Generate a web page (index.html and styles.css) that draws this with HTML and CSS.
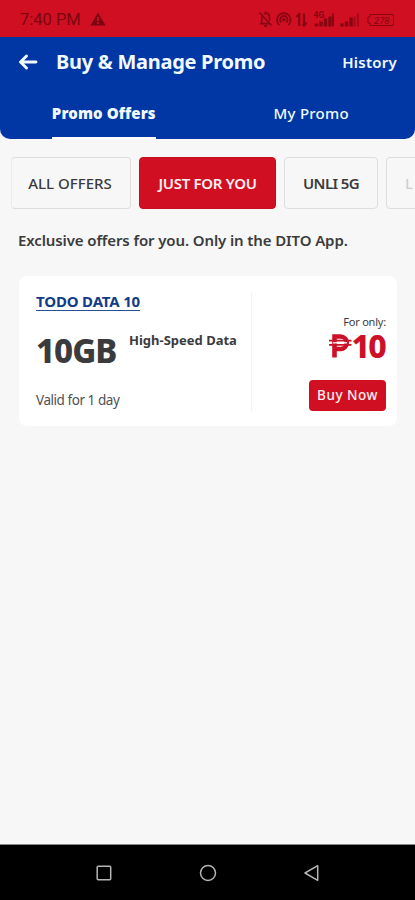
FILE: index.html
```html
<!DOCTYPE html>
<html lang="en">
<head>
<meta charset="utf-8">
<meta name="viewport" content="width=device-width, initial-scale=1">
<title>Buy &amp; Manage Promo</title>
<link rel="stylesheet" href="styles.css">
</head>
<body>
<div class="screen">
  <div class="status">
    <span class="clock">7:40 PM</span>
    <svg class="warn" width="16" height="14" viewBox="0 0 16 14"><path fill="currentColor" fill-rule="evenodd" d="M8 0.4 15.6 13.6H.4ZM7.1 5v4h1.8V5Zm0 5.3v1.8h1.8v-1.8Z"/></svg>
    <svg class="tray" width="138" height="20" viewBox="258 8 138 20" fill="none" stroke="currentColor" stroke-width="1.700">
      <path d="M260 22.700h9M261.800 22v-5q0-2 1-3M264 12.800q2-1.500 4 0 1.500 1 1.500 4v3M265.500 10.500v2M259.500 11.500l12 13"/><path d="M264 25h3" stroke-width="2"/>
      <path d="M279.300 24a6.800 6.800 0 1 1 9 0M281.200 21.300a3.700 3.700 0 1 1 5.200 0"/><circle cx="283.800" cy="18.800" r="1.700" fill="currentColor" stroke="none"/>
      <path d="M299.200 25V13.500M296.500 16l2.700-3 1 1M304 12.500V24M306.500 21.500l-2.500 3-1.500-1.500" stroke-width="2.200"/>
      <path d="M316.500 25.500v-3M321 25.500v-5M325.500 25.500v-8M330 25.500v-10" stroke-width="3.400"/><path d="M333 25.500V12.500" stroke-width="2"/>
      <path d="M342 25.500v-3M346.500 25.500v-5M351 25.500v-9" stroke-width="3.400"/><path d="M354.500 25.500v-10M358 25.500V12.500" stroke-width="2" opacity=".6"/>
      <path d="M370 13.500h22q1.500 0 1.500 1.500v8q0 1.500-1.500 1.500h-22V22h-2v-6h2z" stroke-width="1"/>
      <text x="313.500" y="16.500" class="tiny">4G</text>
      <text x="374" y="22.500" class="level">278</text>
    </svg>
  </div>

  <header class="header">
    <div class="bar">
      <svg class="back" width="20" height="16" viewBox="0 0 20 16"><path d="M18 8H3M8.500 2 2.500 8l6 6" fill="none" stroke="currentColor" stroke-width="2.900" stroke-linecap="round" stroke-linejoin="round"/></svg>
      <h1 class="title">Buy &amp; Manage Promo</h1>
      <span class="history">History</span>
    </div>
    <nav class="tabs">
      <div class="tab"><span class="tab-label active">Promo Offers</span></div>
      <div class="tab"><span class="tab-label">My Promo</span></div>
    </nav>
  </header>

  <div class="chips">
    <div class="chip all"><span>ALL OFFERS</span></div>
    <div class="chip just"><span>JUST FOR YOU</span></div>
    <div class="chip unli"><span>UNLI 5G</span></div>
    <div class="chip more"><span>L</span></div>
  </div>

  <p class="lead"><span>Exclusive offers for you. Only in the DITO App.</span></p>

  <article class="card">
    <div class="details">
      <a class="name">TODO DATA 10</a>
      <div class="data"><span class="amount">10GB</span><span class="kind">High-Speed Data</span></div>
      <div class="valid">Valid for 1 day</div>
    </div>
    <div class="buy">
      <span class="only">For only:</span>
      <div class="price">
        <svg width="23" height="24" viewBox="0 0 23 24" fill="none" stroke="currentColor"><path d="M5.500 23.500V2.500h6a5.500 5.500 0 0 1 0 12.500h-6" stroke-width="4.600"/><path d="M0 6.700h22.500M0 10.900h22.500" stroke-width="1.800"/><path d="M4 8.800h14" stroke="#fff" stroke-width="1.300"/></svg>
        <span>10</span>
      </div>
      <button class="button">Buy Now</button>
    </div>
  </article>

  <footer class="system">
    <svg width="16" height="16" viewBox="0 0 16 16"><rect x="1.200" y="1.200" width="13.500" height="13.500" rx="1"/></svg>
    <svg width="18" height="18" viewBox="0 0 18 18"><circle cx="9" cy="9" r="7.500"/></svg>
    <svg width="17" height="18" viewBox="0 0 17 18"><path d="M14.700 1.700v14.600L2 9Z" stroke-linejoin="round"/></svg>
  </footer>
</div>
</body>
</html>
```
FILE: styles.css
```css
* { box-sizing: border-box; }
body { margin: 0; font-family: "Noto Sans", "Open Sans", sans-serif; color: #3b3b3d; }
svg { display: block; flex: none; }
.screen { width: 415px; height: 900px; background: #f7f7f7; display: flex; flex-direction: column; overflow: hidden; white-space: nowrap; }
.status { height: 37px; flex: none; background: #d10f22; color: #7c0410; display: flex; align-items: center; padding: 1px 19px 0 20px; }
.clock { font: 400 16.5px/20px Roboto, sans-serif; width: 70px; padding-top: 1px; }
.tray { margin-left: auto; opacity: .85; }
.tiny { font: 700 8.5px Roboto, sans-serif; fill: currentColor; stroke: none; }
.level { font: italic 400 9.5px Roboto, sans-serif; fill: currentColor; stroke: none; }
.header { height: 102px; flex: none; background: #0037a4; color: #f0faff; border-radius: 0 0 10px 10px; display: flex; flex-direction: column; }
.bar { height: 50px; display: flex; align-items: center; padding: 0 18px; }
.title { margin: 0 0 0 18px; font-size: 20px; line-height: 28px; font-weight: 700; letter-spacing: -.28px; }
.history { margin-left: auto; font-size: 15px; font-weight: 600; letter-spacing: .25px; }
.tabs { flex: 1; display: grid; grid-template-columns: 1fr 1fr; }
.tab { display: flex; justify-content: center; }
.tab-label { height: 52px; line-height: 53px; font-size: 15px; font-weight: 500; letter-spacing: .25px; }
.tab-label.active { font-weight: 900; letter-spacing: .1px; border-bottom: 2px solid #fff; }
.chips { display: flex; margin: 18px 0 0 11px; flex: none; }
.chip { height: 52px; flex: none; border: 1px solid #dedede; border-radius: 4px; display: flex; align-items: center; justify-content: center; font-size: 15px; font-weight: 500; }
.all { width: 120px; margin-right: 8px; padding-right: 2px; border-left-color: #ececec; }
.just { width: 137px; margin-right: 8px; background: #d10f22; border-color: #c60d20; color: #fff0f1; font-weight: 600; letter-spacing: -.3px; }
.unli { width: 94px; margin-right: 8px; letter-spacing: -.6px; font-weight: 600; }
.more { width: 120px; justify-content: flex-start; padding-left: 18px; color: #cfcfcf; }
.lead { margin: 20px 0 0 18px; font-size: 15px; line-height: 22px; font-weight: 600; letter-spacing: -.11px; }
.card { margin: 25px 18px 0 19px; height: 150px; flex: none; background: #fff; border-radius: 8px; display: flex; padding: 16px 11px 14px 17px; }
.details { width: 216px; border-right: 1px solid #f4f4f4; }
.name { display: table; color: #123b88; font-size: 15px; line-height: 18px; height: 18px; font-weight: 700; letter-spacing: -.17px; border-bottom: 1.5px solid #284f96; }
.data { display: flex; margin-top: 17px; height: 46px; }
.amount { font-size: 33px; line-height: 46px; font-weight: 800; letter-spacing: -1px; width: 93px; }
.kind { font-size: 13px; line-height: 25px; font-weight: 700; }
.valid { font-size: 13.5px; line-height: 20px; margin-top: 16px; color: #505052; letter-spacing: -.45px; }
.buy { flex: 1; display: flex; flex-direction: column; align-items: flex-end; padding-top: 22px; }
.only { font-size: 11px; line-height: 16px; letter-spacing: -.2px; }
.price { display: flex; align-items: center; height: 32px; color: #cd1029; font-size: 32px; line-height: 32px; font-weight: 800; letter-spacing: -1.8px; }
.price span { margin-right: 1px; }
.button { width: 77px; height: 31px; margin: 18px 0 0; padding: 0; border: 0; border-radius: 4px; background: #d10f22; color: #fff0f0; font: 500 13.5px/31px "Noto Sans", sans-serif; letter-spacing: .5px; }
.system { margin-top: auto; height: 56px; flex: none; background: #000; border-top: 1px solid #888; display: flex; align-items: center; justify-content: space-between; padding: 0 95px 0 96px; }
.system svg { fill: none; stroke: #b5b5b5; stroke-width: 1.5; }
```
